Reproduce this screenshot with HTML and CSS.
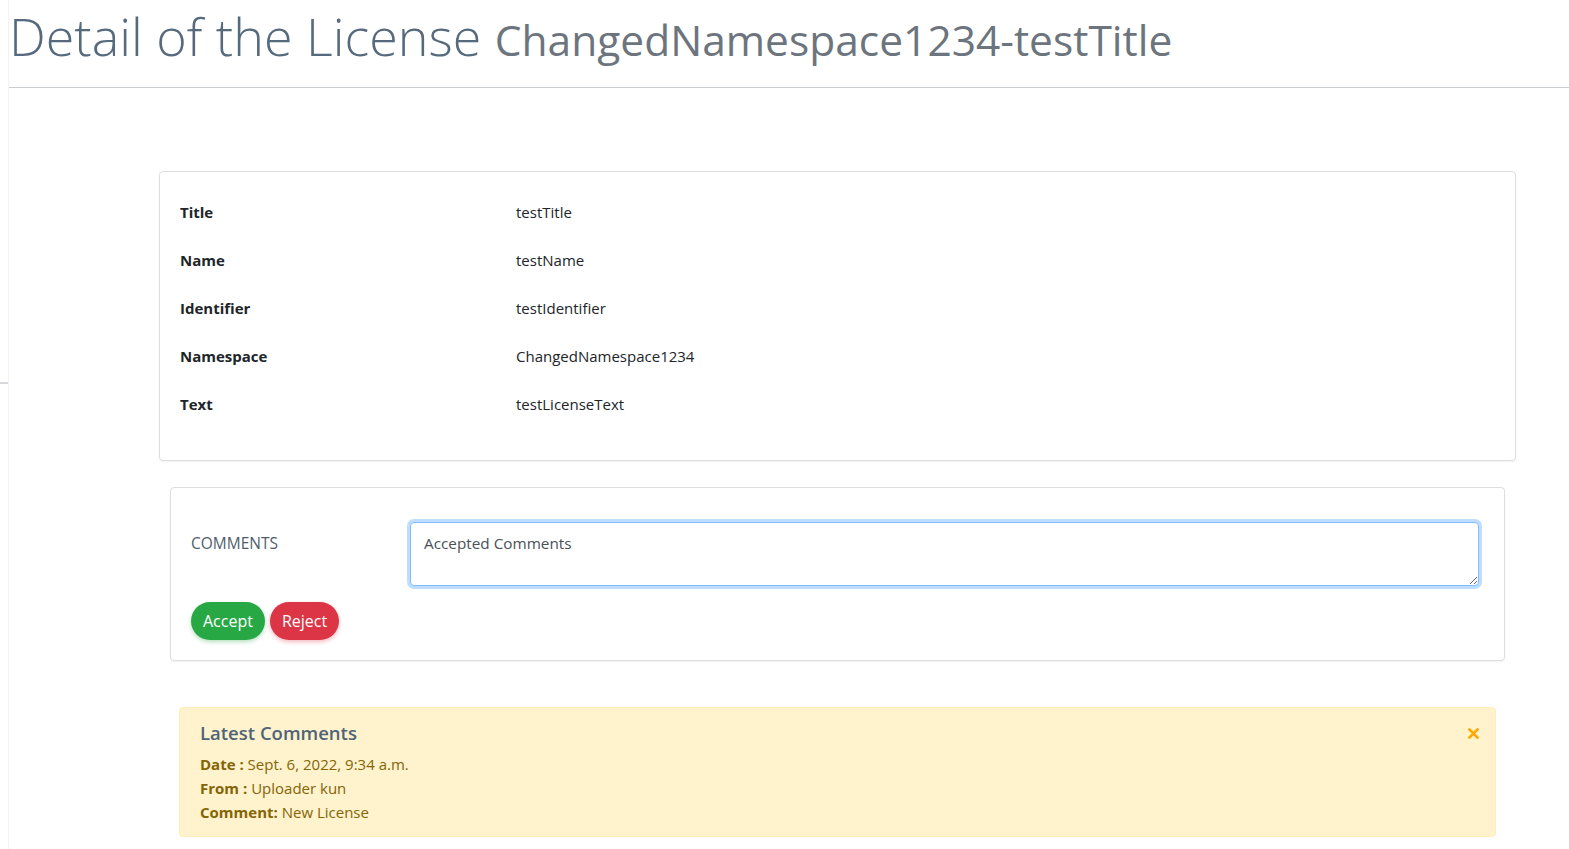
FILE: index.html
```html
<!DOCTYPE html>
<html lang="en">
<head>
<meta charset="utf-8">
<title>Detail of the License</title>
<link rel="stylesheet" href="styles.css">
</head>
<body>
<div class="layout">
  <div class="rail"><div class="rail-mark"></div></div>
  <main class="main">
    <header class="page-header">
      <h1 class="page-title">Detail of the License <small class="page-sub">ChangedNamespace1234-testTitle</small></h1>
    </header>
    <section class="content">
      <div class="card detail-card">
        <div class="detail-row"><div class="detail-label">Title</div><div class="detail-value">testTitle</div></div>
        <div class="detail-row"><div class="detail-label">Name</div><div class="detail-value">testName</div></div>
        <div class="detail-row"><div class="detail-label">Identifier</div><div class="detail-value">testIdentifier</div></div>
        <div class="detail-row"><div class="detail-label">Namespace</div><div class="detail-value">ChangedNamespace1234</div></div>
        <div class="detail-row"><div class="detail-label">Text</div><div class="detail-value">testLicenseText</div></div>
      </div>

      <div class="card review-card">
        <div class="comment-row">
          <label class="comment-label" for="comments">COMMENTS</label>
          <textarea id="comments" class="comment-input">Accepted Comments</textarea>
        </div>
        <div class="actions">
          <button class="btn btn-accept" type="button">Accept</button>
          <button class="btn btn-reject" type="button">Reject</button>
        </div>
      </div>

      <div class="alert">
        <h4 class="alert-heading">Latest Comments</h4>
        <div class="alert-line"><b>Date :</b> Sept. 6, 2022, 9:34 a.m.</div>
        <div class="alert-line"><b>From :</b> Uploader kun</div>
        <div class="alert-line"><b>Comment:</b> New License</div>
        <span class="alert-close">&#x2715;</span>
      </div>
    </section>
  </main>
</div>
</body>
</html>
```

FILE: styles.css
```css
* { box-sizing: border-box; }
html, body { margin: 0; padding: 0; background: #ffffff; }
body {
  font-family: "Open Sans", "Noto Sans", sans-serif;
  font-size: 15px;
  color: #212529;
}
.layout { display: flex; min-height: 849px; }
.rail { width: 8px; flex: 0 0 8px; padding-top: 382px; }
.rail-mark { height: 2px; background: #d6d9dc; }
.main { flex: 1; border-left: 1px solid #f2f2f2; background: #fff; }
.page-header { border-bottom: 1px solid #c9cdd1; height: 88px; }
.page-title {
  margin: 0;
  padding-top: 0;
  font-size: 52px;
  font-weight: 300;
  line-height: 71px;
  color: #566a7e;
  white-space: nowrap;
}
.page-sub { font-size: 42.5px; font-weight: 400; color: #6c757d; }
.content { padding: 83px 53px 0 150px; }
.card {
  background: #fff;
  border: 1px solid #dedede;
  border-radius: 4px;
  box-shadow: 0 1px 2px rgba(0,0,0,0.06);
}
.detail-card { padding: 16px 20px 32px; }
.detail-row { display: flex; height: 48px; align-items: center; }
.detail-label { width: 336px; font-weight: 700; color: #212529; }
.detail-value { color: #212529; }
.review-card { margin: 26px 11px 0; padding: 34px 25px 20px 20px; }
.comment-row { display: flex; align-items: flex-start; }
.comment-label { width: 219px; padding-top: 10px; color: #4e5d6c; font-size: 15.5px; font-weight: 500; }
.comment-input {
  flex: 1;
  height: 64px;
  padding: 10px 13px;
  font-family: inherit;
  font-size: 15.3px;
  color: #495057;
  border: 1px solid #80bdff;
  border-radius: 4px;
  box-shadow: 0 0 0 3px rgba(0,123,255,0.25);
  outline: none;
  resize: vertical;
}
.actions { display: flex; gap: 5px; margin-top: 16px; }
.btn {
  height: 38px;
  padding: 0 12px;
  border: none;
  border-radius: 19px;
  font-family: inherit;
  font-size: 16px;
  color: #fff;
}
.btn-accept { background: #28a745; box-shadow: 0 2px 4px rgba(40,167,69,0.35); }
.btn-reject { background: #dc3545; box-shadow: 0 2px 4px rgba(220,53,69,0.35); }
.alert {
  position: relative;
  margin: 46px 20px 0 20px;
  padding: 13px 20px 12px;
  background: #fff3cd;
  border: 1px solid #ffeeba;
  border-radius: 4px;
  color: #856404;
}
.alert-heading { margin: 0 0 7px; font-size: 18.5px; font-weight: 600; line-height: 24px; color: #4f6378; }
.alert-line { line-height: 24px; }
.alert-line b { font-weight: 700; }
.alert-close {
  position: absolute;
  top: 13px;
  right: 14px;
  color: #ffa800;
  font-size: 18px;
  font-weight: 700;
  line-height: 24px;
}
```
